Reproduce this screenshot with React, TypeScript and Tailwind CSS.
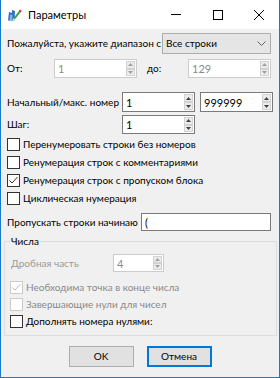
import React from "react";

const font = { fontFamily: 'Lato, "Liberation Sans", Arial, sans-serif' };

function Spinner({ disabled }: { disabled?: boolean }) {
    const arrow = disabled ? "#a0a0a0" : "#404040";
    return (
        <div className="flex flex-col w-[10px] h-full py-[1px] pr-[1px]">
            <div className="flex-1 flex items-center justify-center bg-[#ececec] border border-[#d2d2d2]">
                <svg width="5" height="3" viewBox="0 0 5 3"><path d="M0 3 L2.5 0 L5 3 Z" fill={arrow} /></svg>
            </div>
            <div className="flex-1 flex items-center justify-center bg-[#ececec] border border-[#d2d2d2]">
                <svg width="5" height="3" viewBox="0 0 5 3"><path d="M0 0 L2.5 3 L5 0 Z" fill={arrow} /></svg>
            </div>
        </div>
    );
}

function SpinBox(props: { value: string; width: string; disabled?: boolean }) {
    const { value, width, disabled } = props;
    return (
        <div className={`${width} h-full shrink-0 flex bg-white border ${disabled ? "border-[#cccccc]" : "border-[#7a7a7a]"}`}>
            <div className={`flex-1 flex items-center pl-[3px] text-[11px] ${disabled ? "text-[#8a8a8a]" : "text-black"}`}>{value}</div>
            <Spinner disabled={disabled} />
        </div>
    );
}

function CheckBox(props: { label: string; checked?: boolean; disabled?: boolean }) {
    const { label, checked, disabled } = props;
    return (
        <div className="flex items-center h-full">
            <div className={`w-[13px] h-[13px] flex items-center justify-center bg-white border ${disabled ? "border-[#cccccc]" : "border-[#333333]"}`}>
                {checked &&
                    <svg width="11" height="11" viewBox="0 0 11 11">
                        <path d="M1.5 5.5 L4 8 L9.5 2" fill="none" stroke={disabled ? "#b8b8b8" : "#333333"} strokeWidth="1" />
                    </svg>
                }
            </div>
            <span className={`ml-[3px] ${disabled ? "text-[#8a8a8a]" : "text-black"}`}>{label}</span>
        </div>
    );
}

// blue sheet with a green pencil, red tip at the top
function TitleIcon() {
    return (
        <svg width="14" height="13" viewBox="0 0 14 13">
            <path d="M0 12.5 L1 4 L4 5 L4 2 L7 3 L6.5 12.5 Z" fill="#2f6fc4" />
            <path d="M1.5 12.5 L2.2 6.5 L4.5 7 L4 12.5 Z" fill="#86b6ea" />
            <path d="M4.5 11.5 L10.5 3.5 L12 5 L6 12.5 Z" fill="#3aa24a" />
            <path d="M4.5 11.5 L5.5 10.2 L7 11.5 L6 12.5 Z" fill="#e8e8e8" />
            <path d="M10.5 3.5 L12 1.5 L13.8 3 L12 5 Z" fill="#d8342a" />
        </svg>
    );
}

export default function App() {
    return (
        <div style={font} className="w-[280px] h-[378px] flex flex-col bg-[#f0f0f0] border-x border-b border-[#1979ca] text-[10px] leading-[13px] text-black overflow-hidden">
            <div className="h-[29px] shrink-0 bg-white flex items-center pl-[7px]">
                <TitleIcon />
                <span className="ml-[6px] text-[11px]">Параметры</span>
                <div className="ml-auto flex items-center h-full">
                    <div className="w-[10px] h-[1px] bg-black mr-[32px]" />
                    <div className="w-[10px] h-[10px] border border-black mr-[31px]" />
                    <svg width="10" height="10" viewBox="0 0 10 10" className="mr-[15px]">
                        <path d="M0 0 L10 10 M10 0 L0 10" stroke="black" strokeWidth="1" />
                    </svg>
                </div>
            </div>

            <div className="flex flex-col pl-[6px]">
                <div className="mt-[4px] h-[21px] flex items-center">
                    <span className="w-[155px] shrink-0 whitespace-nowrap">Пожалуйста, укажите диапазон с</span>
                    <div className="w-[109px] h-full flex items-center bg-[#e5e5e5] border border-[#adadad] pl-[3px]">
                        <span>Все строки</span>
                        <svg width="9" height="5" viewBox="0 0 9 5" className="ml-auto mr-[4px]">
                            <path d="M0.5 0.5 L4.5 4.5 L8.5 0.5" fill="none" stroke="#606060" strokeWidth="1" />
                        </svg>
                    </div>
                </div>

                <div className="mt-[5px] h-[19px] flex items-center">
                    <span className="w-[47px] shrink-0">От:</span>
                    <SpinBox value="1" width="w-[83px]" disabled />
                    <span className="ml-[10px] w-[41px] shrink-0">до:</span>
                    <SpinBox value="129" width="w-[83px]" disabled />
                </div>

                <div className="mt-[14px] h-[20px] flex items-center">
                    <span className="w-[115px] shrink-0 whitespace-nowrap">Начальный/макс. номер</span>
                    <SpinBox value="1" width="w-[73px]" />
                    <div className="w-[5px] shrink-0" />
                    <SpinBox value="999999" width="w-[73px]" />
                </div>

                <div className="mt-[3px] h-[19px] flex items-center">
                    <span className="w-[115px] shrink-0">Шаг:</span>
                    <SpinBox value="1" width="w-[73px]" />
                </div>

                <div className="mt-[1px] flex flex-col">
                    <div className="h-[18px]"><CheckBox label="Перенумеровать строки без номеров" /></div>
                    <div className="h-[18px]"><CheckBox label="Ренумерация строк с комментариями" /></div>
                    <div className="h-[18px]"><CheckBox label="Ренумерация строк с пропуском блока" checked /></div>
                    <div className="h-[18px]"><CheckBox label="Циклическая нумерация" /></div>
                </div>

                <div className="mt-[6px] h-[18px] flex items-center">
                    <span className="w-[134px] shrink-0 whitespace-nowrap">Пропускать строки начинаю</span>
                    <div className="w-[130px] h-full flex items-center bg-white border border-[#7a7a7a] pl-[3px] text-[11px]">(</div>
                </div>
            </div>

            <fieldset className="mt-[3px] ml-[3px] w-[273px] border border-[#dcdcdc] px-[5px] pb-[5px] min-w-0">
                <legend className="px-[1px] leading-[14px]">Числа</legend>
                <div className="mt-[6px] h-[18px] flex items-center">
                    <span className="w-[103px] shrink-0 pl-[1px] text-[#9a9a9a]">Дробная часть</span>
                    <SpinBox value="4" width="w-[51px]" disabled />
                </div>
                <div className="mt-[7px] flex flex-col">
                    <div className="h-[17px]"><CheckBox label="Необходима точка в конце числа" checked disabled /></div>
                    <div className="h-[17px]"><CheckBox label="Завершающие нули для чисел" disabled /></div>
                    <div className="h-[17px]"><CheckBox label="Дополнять номера нулями:" /></div>
                </div>
            </fieldset>

            <div className="mt-[10px] flex justify-center gap-[13px]">
                <button className="w-[65px] h-[21px] bg-[#e1e1e1] border border-[#adadad] text-[10px]">OK</button>
                <button className="w-[65px] h-[21px] bg-[#e1e1e1] border-2 border-[#0078d7] text-[10px]">Отмена</button>
            </div>
        </div>
    );
}
